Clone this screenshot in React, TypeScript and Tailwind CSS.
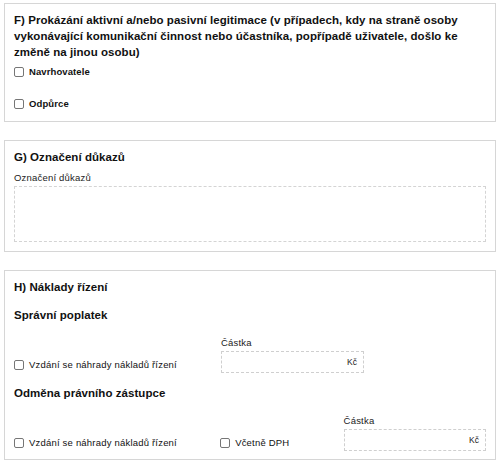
import React from 'react';

function Checkbox({ label, bold }: { label: string; bold?: boolean }) {
  return (
    <label className="flex items-center gap-[5px] h-[14px]">
      <span className="w-[10px] h-[10px] rounded-[2px] border border-[#767676] bg-white flex-shrink-0" />
      <span className={`text-[#111] ${bold ? 'font-bold text-[9.5px] tracking-[0.1px]' : 'text-[9.5px] tracking-[0.2px]'}`}>{label}</span>
    </label>
  );
}

function Amount({ width }: { width: string }) {
  return (
    <div className={`flex flex-col ${width}`}>
      <span className="text-[9.5px] tracking-[0.2px] text-[#222] leading-[14px] mb-[1px]">Částka</span>
      <div className="h-[22px] border border-dashed border-[#cfcfcf] flex items-center justify-end pr-[6px]">
        <span className="text-[8.5px] text-[#222]">Kč</span>
      </div>
    </div>
  );
}

export default function App() {
  return (
    <div
      className="bg-white w-[500px] h-[462px] px-[4px] pt-[3px] flex flex-col gap-[18px] text-[#111]"
      style={{ fontFamily: '"Liberation Sans", Arial, sans-serif' }}
    >
      {/* F */}
      <section className="border border-[#d6d6d6] px-[9px] pt-[8px] pb-[10px]">
        <h2 className="text-[11.5px] font-bold tracking-[0.05px] leading-[16px]">
          F) Prokázání aktivní a/nebo pasivní legitimace (v případech, kdy na straně osoby vykonávající komunikační činnost nebo účastníka, popřípadě uživatele, došlo ke změně na jinou osobu)
        </h2>
        <div className="flex flex-col gap-[18px] mt-[5px]">
          <Checkbox label="Navrhovatele" bold />
          <Checkbox label="Odpůrce" bold />
        </div>
      </section>

      {/* G */}
      <section className="border border-[#d6d6d6] px-[9px] pt-[8px] pb-[9px]">
        <h2 className="text-[11.5px] font-bold tracking-[0.05px] leading-[16px]">G) Označení důkazů</h2>
        <div className="text-[9.5px] tracking-[0.2px] text-[#222] mt-[6px] leading-[14px]">Označení důkazů</div>
        <div className="h-[56px] border border-dashed border-[#d4d4d4] mt-[1px]" />
      </section>

      {/* H */}
      <section className="border border-[#d6d6d6] px-[9px] pt-[8px] pb-[8px]">
        <h2 className="text-[11.5px] font-bold tracking-[0.05px] leading-[16px]">H) Náklady řízení</h2>
        <h3 className="text-[11.5px] font-bold tracking-[0.05px] leading-[16px] mt-[12px]">Správní poplatek</h3>
        <div className="flex items-end mt-[13px]">
          <div className="w-[207px] h-[22px] flex items-end pb-[1px]">
            <Checkbox label="Vzdání se náhrady nákladů řízení" />
          </div>
          <Amount width="w-[143px]" />
        </div>
        <h3 className="text-[11.5px] font-bold tracking-[0.05px] leading-[16px] mt-[12px]">Odměna právního zástupce</h3>
        <div className="flex items-end mt-[13px]">
          <div className="w-[207px] h-[22px] flex items-end pb-[1px]">
            <Checkbox label="Vzdání se náhrady nákladů řízení" />
          </div>
          <div className="w-[124px] h-[22px] flex items-end pb-[1px]">
            <Checkbox label="Včetně DPH" />
          </div>
          <Amount width="w-[143px]" />
        </div>
      </section>
    </div>
  );
}
